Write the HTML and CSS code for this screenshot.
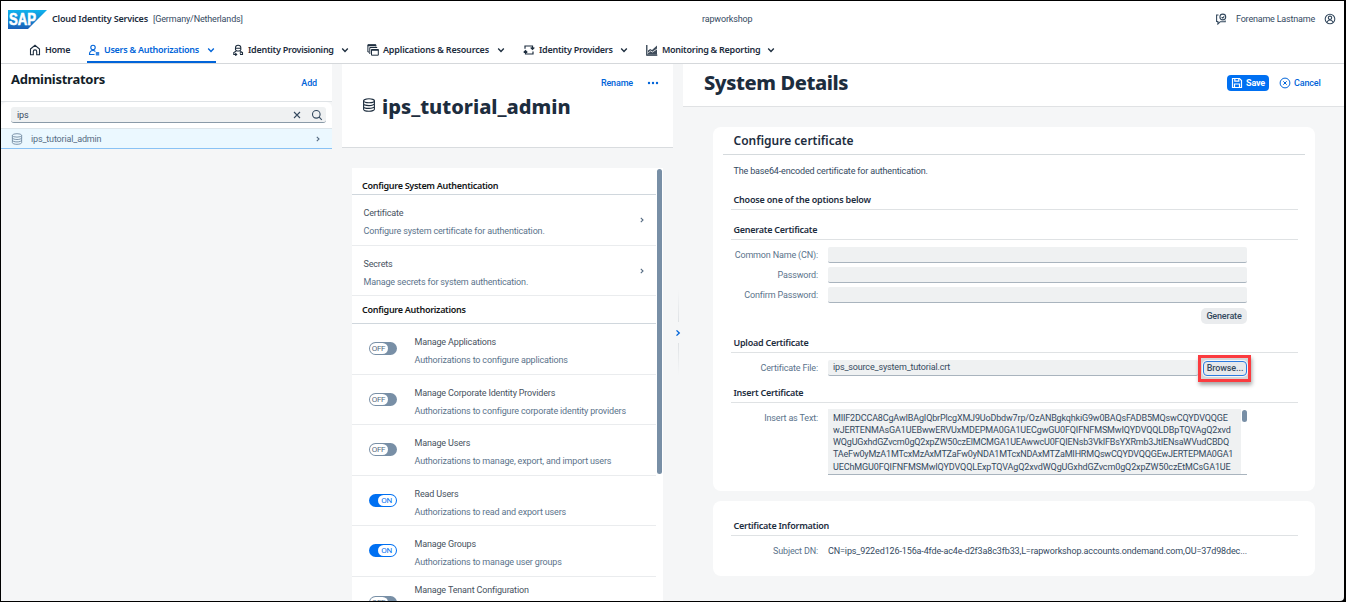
FILE: index.html
```html
<!DOCTYPE html>
<html lang="en">
<head>
<meta charset="utf-8">
<title>Administrators</title>
<link rel="stylesheet" href="styles.css">
</head>
<body>
<svg class="defs" aria-hidden="true">
  <defs>
    <symbol id="chev-down" viewBox="0 0 8 8"><path d="M1.2 2.6 4 5.4 6.8 2.6" fill="none" stroke="currentColor" stroke-width="1.4"/></symbol>
    <symbol id="chev-right" viewBox="0 0 8 8"><path d="M2.8 1.9 5 4 2.8 6.100" fill="none" stroke="currentColor" stroke-width="1.1"/></symbol>
    <symbol id="db" viewBox="0 0 14 14"><g fill="none" stroke="currentColor" stroke-width="1.1"><ellipse cx="7" cy="2.8" rx="5.4" ry="2"/><path d="M1.6 2.8v8.4c0 1.1 2.4 2 5.4 2s5.4-.9 5.4-2V2.8M1.6 5.6c0 1.1 2.4 2 5.4 2s5.4-.9 5.4-2M1.6 8.4c0 1.1 2.4 2 5.4 2s5.4-.9 5.4-2"/></g></symbol>
    <linearGradient id="logo-blue" x1="0" y1="0" x2="0" y2="1"><stop offset="0" stop-color="#0fb3ee"/><stop offset="1" stop-color="#1a5fb8"/></linearGradient>
  </defs>
</svg>
<div class="window">
  <header class="shell">
    <svg class="logo" viewBox="0 0 39 19"><path d="M0 0h39L20 19H0z" fill="url(#logo-blue)"/><text x="1" y="15.3" textLength="27" lengthAdjust="spacingAndGlyphs">SAP</text></svg>
    <span class="product">Cloud Identity Services</span>
    <span class="region">[Germany/Netherlands]</span>
    <span class="tenant">rapworkshop</span>
    <svg class="feedback" viewBox="0 0 12 12"><g fill="none" stroke="#354a5f" stroke-width="1.1"><path d="M3.500 2H1.600v6.500h1.300V11l2.400-2.300h4.900V7.600"/><circle cx="7.800" cy="4" r="2.900"/><path d="m6.600 4.300 1.200.8 1.400-1.800"/></g></svg>
    <span class="user">Forename Lastname</span>
    <svg class="avatar" viewBox="0 0 12 12"><g fill="none" stroke="#354a5f" stroke-width="1.1"><circle cx="6" cy="6" r="4.8"/><circle cx="6" cy="4.8" r="1.7"/><path d="M3 9.2C3.6 7.6 4.7 7 6 7s2.400.6 3 2.200"/></g></svg>
  </header>
  <nav class="nav">
    <a class="home"><svg class="ico" viewBox="0 0 12 12"><path d="M1.500 5 6 1.300 10.500 5v5.800H7.700V7.500c0-2.200-3.400-2.200-3.400 0v3.300H1.500z" fill="none" stroke="currentColor" stroke-width="1.100"/></svg><span>Home</span></a>
    <a class="users active"><svg class="ico" viewBox="0 0 12 12"><g fill="none" stroke="currentColor" stroke-width="1.100"><circle cx="5" cy="3.500" r="2.200"/><path d="M6.500 10.500H1.500c0-2.300 1.500-4 3.500-4 1 0 1.800.4 2.400 1"/></g><path d="M7.800 8h3.400v3.500H7.800z" fill="currentColor" opacity=".8"/></svg><span>Users &amp; Authorizations</span><svg class="dd"><use href="#chev-down"/></svg></a>
    <a class="prov"><svg class="ico" viewBox="0 0 12 12"><g fill="none" stroke="currentColor" stroke-width="1.100"><path d="M3.500 6V3.600C3.500.4 8.800.4 8.800 3.600V6M3.500 4.200h5.300M3.500 6l1.300 1h2.700l1.300-1M4 7.200 1.800 8.500v2h2.700M8.300 7.200l2.200 1.300v2H8M3.300 9.200l1.400 1.300-1.400 1.200M9.200 8.200 7.800 9.500"/></g></svg><span>Identity Provisioning</span><svg class="dd"><use href="#chev-down"/></svg></a>
    <a class="apps"><svg class="ico" viewBox="0 0 12 12"><g fill="none" stroke="currentColor"><path d="M2 8H.9V.8h8v1.700M2.800 10V3.500h7.400M11.300 5.500v5.700H4.500V5.500z"/><path d="M.8 1.400h8M4.500 6h7" stroke-width="1.700"/></g></svg><span>Applications &amp; Resources</span><svg class="dd"><use href="#chev-down"/></svg></a>
    <a class="idps"><svg class="ico" viewBox="0 0 12 12"><g fill="none" stroke="currentColor" stroke-width="1.200"><path d="M2 4.700V2h7.500v2.800M7.700 3.500l1.800 1.800 1.800-1.800M10 7.500V10H2.500V7.200M.7 8.500l1.800-1.800 1.800 1.800"/></g></svg><span>Identity Providers</span><svg class="dd"><use href="#chev-down"/></svg></a>
    <a class="mon"><svg class="ico" viewBox="0 0 12 12"><path d="M.8 1v10.200h10.500" fill="none" stroke="currentColor" stroke-width="1.200"/><path d="M2 6.500 4.200 5 6 6l5-4.500v9H2z" fill="currentColor" opacity=".85"/><path d="M2.200 8.800 4.500 7 6.500 8 11 5" fill="none" stroke="#fff" stroke-width=".8"/></svg><span>Monitoring &amp; Reporting</span><svg class="dd"><use href="#chev-down"/></svg></a>
  </nav>
  <main class="columns">
    <section class="master">
      <div class="master-head"><h2>Administrators</h2><a class="link">Add</a></div>
      <div class="search-wrap"><div class="search"><span>ips</span>
        <svg viewBox="0 0 10 10"><path d="m2 2 6 6M8 2 2 8" stroke="#354a5f" stroke-width="1.100"/></svg>
        <svg class="lens" viewBox="0 0 12 12"><g fill="none" stroke="#354a5f" stroke-width="1.100"><circle cx="5.300" cy="5.300" r="3.800"/><path d="m8.200 8.200 2.600 2.600"/></g></svg></div></div>
      <div class="item"><svg class="item-db"><use href="#db"/></svg><span>ips_tutorial_admin</span><svg class="arrow"><use href="#chev-right"/></svg></div>
    </section>
    <section class="middle">
      <div class="object-head">
        <div class="actions"><a class="link">Rename</a><svg viewBox="0 0 12 4" class="dots"><g fill="#0064d9"><circle cx="2" cy="2" r="1.200"/><circle cx="6" cy="2" r="1.200"/><circle cx="10" cy="2" r="1.200"/></g></svg></div>
        <h1><svg><use href="#db"/></svg><span>ips_tutorial_admin</span></h1>
      </div>
      <div class="scroller">
        <div class="list">
          <h3 class="first">Configure System Authentication</h3>
          <div class="row nav-row"><div><p class="t">Certificate</p><p class="d">Configure system certificate for authentication.</p></div><svg class="arrow"><use href="#chev-right"/></svg></div>
          <div class="row nav-row"><div><p class="t">Secrets</p><p class="d">Manage secrets for system authentication.</p></div><svg class="arrow"><use href="#chev-right"/></svg></div>
          <h3 class="second">Configure Authorizations</h3>
          <div class="row"><span class="sw"><i>OFF</i></span><div><p class="t">Manage Applications</p><p class="d">Authorizations to configure applications</p></div></div>
          <div class="row"><span class="sw"><i>OFF</i></span><div><p class="t">Manage Corporate Identity Providers</p><p class="d">Authorizations to configure corporate identity providers</p></div></div>
          <div class="row"><span class="sw"><i>OFF</i></span><div><p class="t">Manage Users</p><p class="d">Authorizations to manage, export, and import users</p></div></div>
          <div class="row"><span class="sw on"><i>ON</i></span><div><p class="t">Read Users</p><p class="d">Authorizations to read and export users</p></div></div>
          <div class="row"><span class="sw on"><i>ON</i></span><div><p class="t">Manage Groups</p><p class="d">Authorizations to manage user groups</p></div></div>
          <div class="row tall"><span class="sw"><i>OFF</i></span><div><p class="t">Manage Tenant Configuration</p></div></div>
        </div>
        <div class="track"><div class="thumb"></div></div>
      </div>
    </section>
    <div class="splitter"><span class="bar up"></span><svg><use href="#chev-right"/></svg><span class="bar down"></span></div>
    <section class="detail">
      <div class="detail-head"><h1>System Details</h1>
        <button class="save"><svg viewBox="0 0 12 12"><g fill="none" stroke="#fff" stroke-width="1.200"><path d="M1.500 1.500h7l2 2v7h-9z"/><path d="M3.800 1.500v2.700h4V1.500M3.500 10.500V7h5v3.500"/></g></svg><span>Save</span></button>
        <button class="cancel"><svg viewBox="0 0 12 12"><g fill="none" stroke="#0064d9" stroke-width="1"><circle cx="6" cy="6" r="4.900"/><path d="m4.300 4.300 3.400 3.400M7.700 4.300 4.300 7.700"/></g></svg><span>Cancel</span></button>
      </div>
      <div class="card main-card">
        <h2>Configure certificate</h2>
        <p class="intro">The base64-encoded certificate for authentication.</p>
        <h4 class="choose">Choose one of the options below</h4>
        <h4 class="gen">Generate Certificate</h4>
        <div class="form">
          <div class="field"><label>Common Name (CN):</label><div class="input"></div></div>
          <div class="field"><label>Password:</label><div class="input"></div></div>
          <div class="field"><label>Confirm Password:</label><div class="input"></div></div>
        </div>
        <div class="gen-row"><button class="generate">Generate</button></div>
        <h4 class="upload">Upload Certificate</h4>
        <div class="field file"><label>Certificate File:</label><div class="input"><span>ips_source_system_tutorial.crt</span></div><div class="callout"><button>Browse...</button></div></div>
        <h4 class="ins">Insert Certificate</h4>
        <div class="field text"><label>Insert as Text:</label>
          <div class="area"><div class="area-text"><p class="l1">MIIF2DCCA8CgAwIBAgIQbrPlcgXMJ9UoDbdw7rp/OzANBgkqhkiG9w0BAQsFADB5MQswCQYDVQQGE</p><p class="l2">wJERTENMAsGA1UEBwwERVUxMDEPMA0GA1UECgwGU0FQIFNFMSMwIQYDVQQLDBpTQVAgQ2xvd</p><p class="l3">WQgUGxhdGZvcm0gQ2xpZW50czElMCMGA1UEAwwcU0FQIENsb3VkIFBsYXRmb3JtIENsaWVudCBDQ</p><p class="l4">TAeFw0yMzA1MTcxMzAxMTZaFw0yNDA1MTcxNDAxMTZaMIHRMQswCQYDVQQGEwJERTEPMA0GA1</p><p class="l5">UEChMGU0FQIFNFMSMwIQYDVQQLExpTQVAgQ2xvdWQgUGxhdGZvcm0gQ2xpZW50czEtMCsGA1UE</p></div><span class="area-thumb"></span></div></div>
      </div>
      <div class="card info-card">
        <h4>Certificate Information</h4>
        <div class="field"><label>Subject DN:</label><span class="value">CN=ips_922ed126-156a-4fde-ac4e-d2f3a8c3fb33,L=rapworkshop.accounts.ondemand.com,OU=37d98dec...</span></div>
      </div>
    </section>
  </main>
</div>
</body>
</html>
```

FILE: styles.css
```css
* { box-sizing: border-box; }
body { margin: 0; background: #000; font: 9px/12px Roboto, "Liberation Sans", sans-serif; letter-spacing: -.16px; color: #354a5f; }
h1, h2, h3, h4, p { margin: 0; }
button { border: 0; margin: 0; padding: 0; font: inherit; letter-spacing: inherit; color: inherit; background: none; }
svg { display: block; flex: none; }
span, a, p, h1, h2, h3, h4, label { white-space: nowrap; }
.defs { position: absolute; width: 0; height: 0; }

.window { width: 1343px; height: 600px; margin: 1px 0 0 1px; background: #f5f6f7; overflow: hidden; display: flex; flex-direction: column; border-radius: 0 0 4px 0; }
.shell { height: 36px; flex: none; background: #fff; display: flex; align-items: center; padding-left: 7px; }
.logo { width: 39px; height: 19px; margin-right: 5px; }
.logo text { font: bold 16px "Liberation Sans", sans-serif; letter-spacing: 0; fill: #fff; stroke: #fff; stroke-width: .6px; }
.product { font: 600 9px/12px "Noto Sans", sans-serif; color: #1d2d3e; width: 101px; letter-spacing: -.2px; }
.region { width: 549px; }
.tenant { width: 513px; }
.feedback { width: 12px; height: 12px; margin-right: 9px; }
.user { width: 88px; letter-spacing: -.2px; }
.avatar { width: 12px; height: 12px; }

.nav { height: 27px; flex: none; background: #fff; display: flex; padding-left: 28px; border-bottom: 1px solid #d5d8db; font: 600 9px/12px "Noto Sans", sans-serif; letter-spacing: -.27px; color: #1d2d3e; }
.nav a { height: 26px; display: flex; align-items: center; border-bottom: 2px solid transparent; padding-top: 2px; }
.nav .ico { width: 12px; height: 12px; margin-right: 4px; }
.nav .dd { width: 8px; height: 8px; margin-left: auto; }
.nav .home { width: 58px; }
.nav .users { width: 129px; padding: 2px 1px 0 1px; }
.nav .active { color: #0064d9; border-color: #0064d9; }
.nav .prov { width: 117px; margin-left: 16px; }
.nav .apps { width: 138px; margin-left: 18px; letter-spacing: -.18px; }
.nav .idps { width: 105px; margin-left: 18px; }
.nav .mon { width: 129px; margin-left: 18px; }

.columns { flex: 1; display: flex; min-height: 0; }
.link { color: #0064d9; font-weight: 500; }

.master { width: 331px; flex: none; }
.master-head { height: 38px; background: #fff; border-bottom: 1px solid #dfe3e6; display: flex; justify-content: space-between; padding: 7px 15px 0 10px; }
.master-head h2 { font: bold 13px/16px "Noto Sans", sans-serif; color: #131e29; letter-spacing: -.27px; }
.master-head .link { margin-top: 6px; }
.search-wrap { height: 26px; background: #fff; border-radius: 6px 6px 0 0; padding: 5px 6px 0 10px; }
.search { height: 16px; border-radius: 3px; background: #eff1f2; border-bottom: 1px solid #8a9aa8; display: flex; align-items: center; padding: 0 3px 0 6px; }
.search span { flex: 1; }
.search svg { width: 10px; height: 10px; }
.search .lens { width: 12px; height: 12px; margin-left: 9px; }
.item { height: 21px; background: #ebf8ff; border-top: 1px solid #dde5ea; border-bottom: 1px solid #89c2f5; display: flex; align-items: center; padding: 0 10px 0 10px; }
.item span { flex: 1; color: #556b82; }
.item-db { width: 12px; height: 12px; margin-right: 8px; color: #788fa6; }
.arrow { width: 8px; height: 8px; color: #556b82; }

.middle { width: 331px; flex: none; margin-left: 10px; display: flex; flex-direction: column; }
.object-head { height: 84px; flex: none; background: #fff; border-bottom: 1px solid #d9dcdf; }
.actions { display: flex; justify-content: flex-end; align-items: center; padding: 13px 14px 0 0; }
.dots { width: 12px; height: 4px; margin-left: 14px; }
.object-head h1 { display: flex; align-items: flex-start; margin-top: 4px; padding-left: 20px; font: 800 20px/28px "Noto Sans", sans-serif; letter-spacing: 0; color: #1d2d3e; }
.object-head h1 svg { width: 14px; height: 14px; margin: 5px 6px 0 0; }
.scroller { flex: 1; margin: 20px 0 0 10px; width: 311px; display: flex; background: #fff; overflow: hidden; }
.list { width: 304px; }
.list h3 { font: 600 9px/12px "Noto Sans", sans-serif; letter-spacing: -.3px; color: #131516; padding-left: 10px; border-bottom: 1px solid #d0d7dd; }
.list .first { height: 27px; padding-top: 12px; }
.list .second { height: 27px; padding-top: 7px; margin-top: 1px; letter-spacing: -.28px; }
.row { height: 50.5px; display: flex; align-items: flex-start; border-bottom: 1px solid #eaecee; padding: 12px 10px 0 16.5px; }
.nav-row { padding-left: 11.5px; justify-content: space-between; }
.nav-row .arrow { margin-top: 9px; }
.t { color: #475260; line-height: 12px; }
.d { color: #5b738b; margin-top: 6px; }
.sw { width: 28px; height: 13px; margin: 6px 18px 0 0; border-radius: 7px; background: #788fa6; padding: 1px; flex: none; }
.sw i { display: block; width: 18px; height: 11px; border-radius: 6px; background: #fff; color: #556b82; font: 8px/11.500px Roboto, sans-serif; letter-spacing: -.3px; text-align: center; }
.sw.on { background: #0070f2; }
.sw.on i { margin-left: 8px; color: #0070f2; }
.tall { padding-top: 7px; height: 60px; }
.tall .sw { margin-top: 12px; }
.track { width: 7px; padding: 1px 0 0 1px; }
.thumb { width: 5px; height: 305px; border-radius: 3px; background: #788fa6; }

.splitter { width: 10px; flex: none; display: flex; flex-direction: column; align-items: center; padding-top: 226px; }
.splitter svg { width: 10px; height: 10px; margin: 6px 0 5px; color: #0064d9; stroke-width: 2; }
.bar { width: 1px; height: 32px; }
.up.bar { background: linear-gradient(#f5f6f7, #dfe2e5); }
.down.bar { background: linear-gradient(#dfe2e5, #f5f6f7); }

.detail { width: 661px; flex: none; }
.detail-head { height: 43px; background: #fff; border-bottom: 1px solid #e0e2e4; display: flex; padding-left: 21px; }
.detail-head h1 { width: 523px; padding-top: 5px; font: 800 20px/28px "Noto Sans", sans-serif; letter-spacing: -.4px; color: #1d2d3e; }
.save { width: 42px; height: 16px; margin: 11px 10px 0 0; border-radius: 4px; background: #0070f2; color: #fff; display: flex; align-items: center; padding-left: 4px; font-weight: 700; }
.save svg { width: 12px; height: 12px; margin-right: 3px; }
.cancel { height: 16px; margin-top: 11px; display: flex; align-items: center; color: #0064d9; font-weight: 500; }
.cancel svg { width: 12px; height: 12px; margin-right: 3px; }

.card { width: 602px; margin-left: 30px; border-radius: 8px; background: #fff; }
.main-card { height: 364px; margin-top: 20px; }
.card h2 { height: 28px; margin: 0 10px; padding: 6px 0 0 10.5px; border-bottom: 1px solid #d5dadd; font: 600 12px/16px "Noto Sans", sans-serif; letter-spacing: 0; color: #1d2d3e; }
.intro { padding: 10px 0 0 20.5px; }
h4 { height: 17px; margin: 0 17px 0 18px; padding: 1px 0 0 2.5px; border-bottom: 1px solid #dfe2e4; font: 600 9px/12px "Noto Sans", sans-serif; letter-spacing: -.25px; color: #1d2d3e; }
.choose { margin-top: 16px; letter-spacing: -.2px; }
.gen { margin-top: 13px; }
.form { padding-top: 7px; display: grid; gap: 4px; }
.field { display: flex; height: 16px; align-items: center; }
.field label { width: 105px; margin-right: 10px; text-align: right; color: #5b738b; }
.input { width: 419px; height: 16px; border-radius: 2px; background: #eff1f2; border-bottom: 1px solid #a9b4be; padding: 2px 5px; }
.gen-row { display: flex; justify-content: flex-end; padding: 5px 68px 0 0; }
.generate { width: 46px; height: 16px; border-radius: 5px; background: #eaecee; font-weight: 500; }
.upload { margin-top: 12px; }
.file { margin-top: 7px; }
.file label { padding-bottom: 1px; }
.file .input { width: 370px; padding-top: 1px; }
.callout { width: 53px; height: 27px; flex: none; border: 3px solid #fb3b3f; background: #d4d6d8; box-shadow: 1px 3px 4px rgba(0,0,0,.35); padding: 3px 2px 2px; position: relative; }
.callout button { width: 44px; height: 15px; border-radius: 4px; border: 1.500px solid #2c7be0; background: #e6e9ec; font: 500 9px/11px Roboto, sans-serif; letter-spacing: -.1px; display: block; box-shadow: 0 0 0 1px #f5f6f7; }
.ins { margin-top: 10px; }
.text { height: 66px; margin-top: 6px; align-items: flex-start; }
.text label { padding-top: 3px; }
.area { width: 419px; height: 66px; display: flex; border-bottom: 1px solid #a9b4be; }
.area-text { width: 413px; background: #eff1f2; padding: 2.500px 0 0 5px; line-height: 12.250px; overflow: hidden; }
.l2 { letter-spacing: -.13px; }
.l3, .l4 { letter-spacing: -.19px; }
.l5 { letter-spacing: -.12px; }
.area-thumb { width: 5px; height: 12px; margin: 1px 0 0 1px; border-radius: 3px; background: #788fa6; }
.info-card { height: 75px; margin-top: 10px; padding-top: 18px; }
.info-card .field { margin-top: 7px; }
.value { letter-spacing: -.13px; }
```
